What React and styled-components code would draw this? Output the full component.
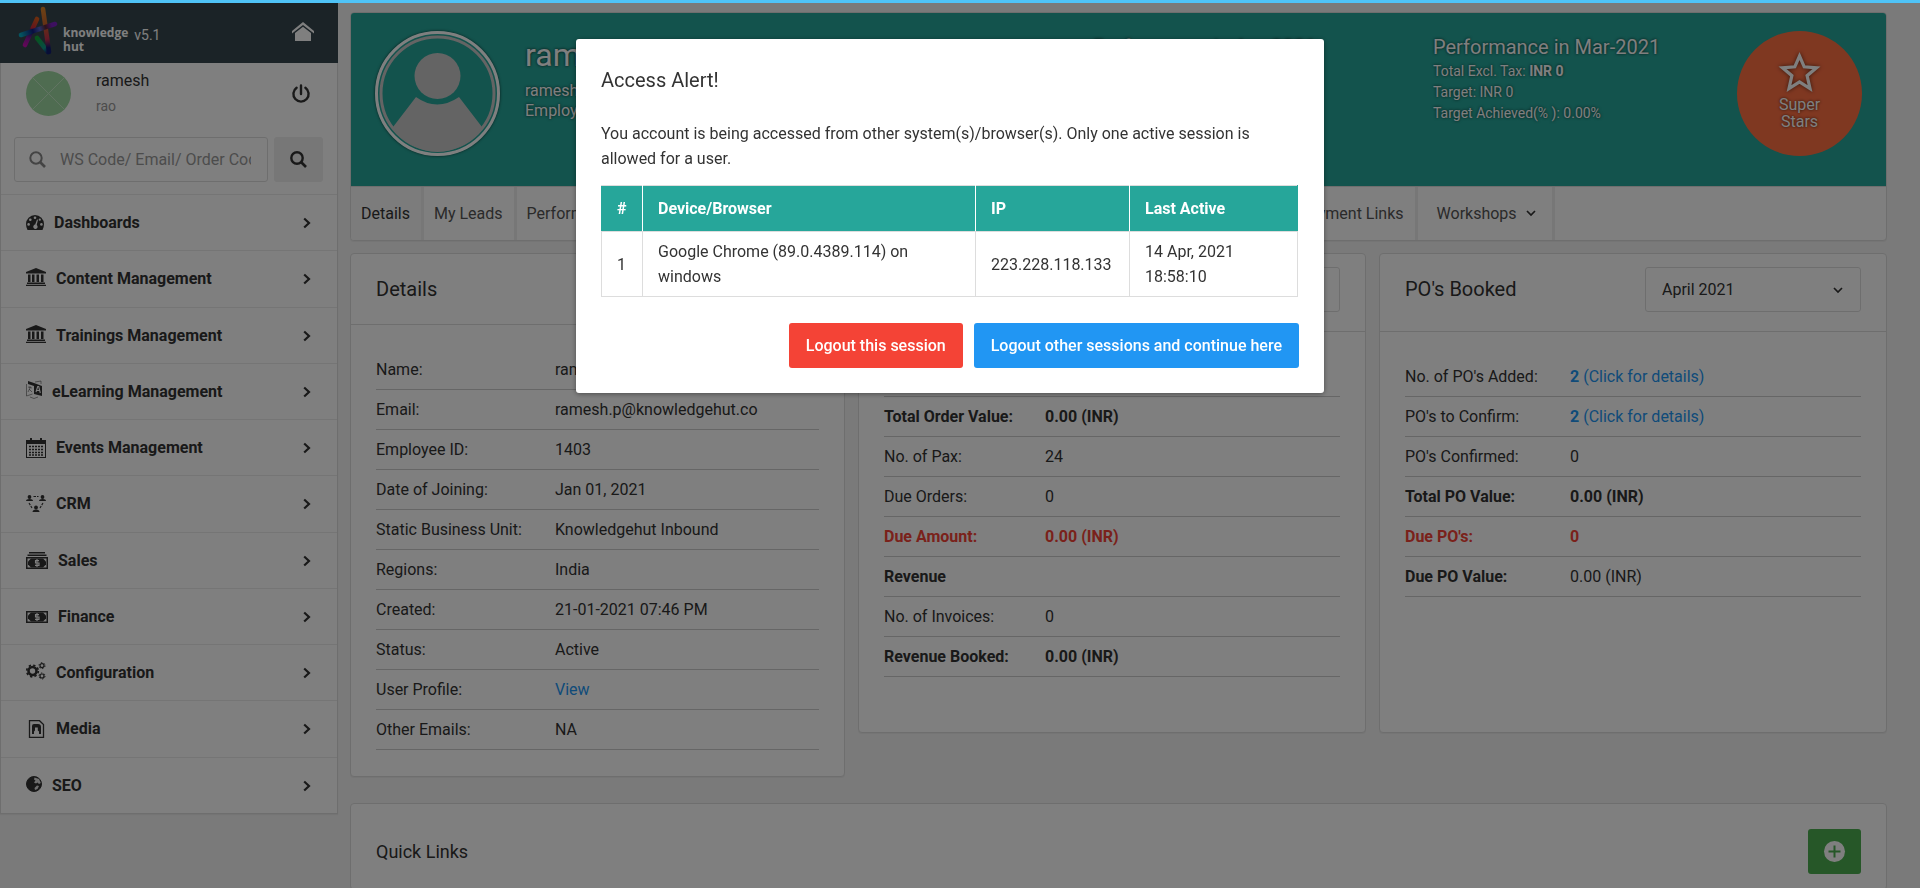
import React from "react";
import styled, { createGlobalStyle, css } from "styled-components";

const GlobalStyle = createGlobalStyle`
  *, *::before, *::after { box-sizing: border-box; }
  body {
    margin: 0;
    overflow: hidden;
    background: #f5f5f5;
    color: #333;
    font-family: Roboto, "Liberation Sans", sans-serif;
    font-size: 16px;
    line-height: 25px;
  }
  h1, h2, h3, p, dl, dd, ul { margin: 0; padding: 0; font-weight: 400; }
  ul { list-style: none; }
  a { color: inherit; text-decoration: none; }
  button, input, select { font: inherit; color: inherit; }
  button { cursor: pointer; border: 0; padding: 0; background: none; }
  svg { display: block; flex: none; overflow: visible; }
`;

const LoadingBar = styled.div`
  position: fixed;
  inset: 0 0 auto 0;
  height: 3px;
  background: #4fc3f7;
  z-index: 20;
`;

const Page = styled.div`
  display: flex;
  align-items: flex-start;
  gap: 12px;
  padding-right: 33px;
`;

/* ---------- Sidebar ---------- */

const Sidebar = styled.aside`
  flex: none;
  width: 338px;
`;

const BrandBar = styled.header`
  display: flex;
  align-items: center;
  height: 63px;
  padding: 0 24px 0 19px;
  background: #37474f;
  color: #fff;
`;

const BrandName = styled.span`
  margin: 16px 6px 0 5px;
  font: 700 12px/14px "Open Sans", "Noto Sans", sans-serif;
`;

const Version = styled.span`
  flex: 1;
  font-size: 14px;
  padding-top: 7px;
`;

const SidePanel = styled.div`
  background: #fff;
  border: 1px solid #ddd;
  border-top: 0;
  box-shadow: 0 1px 1px rgba(0, 0, 0, 0.05);
`;

const UserBlock = styled.div`
  display: flex;
  align-items: center;
  padding: 5px 27px 0 25px;
`;

const UserText = styled.div`
  flex: 1;
  padding-left: 25px;
  line-height: 26px;
`;

const UserSurname = styled.div`
  font-size: 14px;
  line-height: 24px;
  color: #999;
`;

const SearchForm = styled.form`
  display: flex;
  gap: 6px;
  padding: 19px 14px 12px 13px;
`;

const SearchField = styled.label`
  flex: 1;
  min-width: 0;
  display: flex;
  align-items: center;
  gap: 14px;
  height: 45px;
  padding: 0 16px 0 14px;
  border: 1px solid #ddd;
  border-radius: 3px;
  color: #999;

  input {
    flex: 1;
    min-width: 0;
    border: 0;
    padding: 0;
    outline: 0;
    background: none;
  }
  input::placeholder { color: #999; opacity: 1; }
`;

const SearchButton = styled.button`
  display: grid;
  place-items: center;
  width: 49px;
  height: 45px;
  border-radius: 3px;
  background: #eee;
`;

const MenuItem = styled.li`
  border-top: 1px solid #eaeaea;

  &:nth-child(4n + 2) { padding-bottom: 1px; }
`;

const MenuLink = styled.a`
  display: flex;
  align-items: center;
  gap: 10px;
  height: 55px;
  padding: 0 26px 0 25px;
  font-weight: 700;

  span { flex: 1; }
  svg:first-child { margin-bottom: ${(p) => (p.$raised ? 4 : 0)}px; }
`;

/* ---------- Main column ---------- */

const Main = styled.main`
  flex: 1;
  min-width: 0;
  padding-top: 12px;
`;

const Card = styled.section`
  background: #fff;
  border: 1px solid #ddd;
  border-radius: 4px;
  box-shadow: 0 1px 1px rgba(0, 0, 0, 0.05);
  overflow: hidden;
`;

const Hero = styled.div`
  display: flex;
  height: 173px;
  padding: 18px 24px 0 24px;
  background: #26a69a;
  color: #fff;
  text-shadow: 0 0 3px rgba(0, 0, 0, 0.8);
`;

const Avatar = styled.div`
  flex: none;
  width: 125px;
  height: 125px;
  border: 3px solid #fff;
  border-radius: 50%;
  box-shadow: 0 0 3px rgba(0, 0, 0, 0.7);
`;

const Person = styled.div`
  flex: 1;
  padding: 4px 0 0 25px;
  line-height: 20px;
`;

const PersonName = styled.h1`
  font-size: 32px;
  line-height: 40px;
  padding-bottom: 6px;
`;

const Performance = styled.div`
  flex: none;
  width: 340px;
  padding-top: 2px;
  font-size: 14px;
  line-height: 21px;
`;

const PerformanceTitle = styled.h2`
  font-size: 20px;
  line-height: 28px;
`;

const Badge = styled.div`
  flex: none;
  display: flex;
  flex-direction: column;
  align-items: center;
  width: 125px;
  height: 125px;
  margin-left: -36px;
  padding-top: 20px;
  border-radius: 50%;
  background: #ff7043;
  line-height: 17px;
  text-align: center;

  svg { margin-bottom: 4px; filter: drop-shadow(0 0 2px rgba(0, 0, 0, 0.6)); }
`;

const Tabs = styled.ul`
  display: flex;
  height: 54px;
  border-top: 1px solid #ddd;
`;

const Tab = styled.li`
  display: flex;
  border-right: 3px solid #eee;

  a {
    display: flex;
    align-items: center;
    gap: 9px;
    padding: 0 ${(p) => (p.$menu ? 16 : 11)}px 0 ${(p) => (p.$menu ? 19 : 10)}px;
    background: ${(p) => (p.$active ? "#f8f8f8" : "none")};
    color: ${(p) => (p.$active ? "#333" : "#555")};
  }
`;

const TabGap = styled.li`
  flex: 0 1 656px;
`;

const Panels = styled.div`
  display: grid;
  grid-template-columns: 495fr 1029fr;
  gap: 13px;
  align-items: start;
  padding: 12px 0 26px;
`;

const PanelPair = styled.div`
  display: grid;
  grid-template-columns: 1fr 1fr;
  gap: 13px;
`;

const PanelHead = styled.div`
  display: flex;
  align-items: flex-start;
  justify-content: space-between;
  padding: 13px 25px ${(p) => (p.$tall ? 19 : 12)}px;
  border-bottom: 1px solid #ddd;
`;

const PanelTitle = styled.h2`
  font-size: ${(p) => (p.$small ? 18 : 20)}px;
  line-height: 45px;
`;

const MonthSelect = styled.div`
  position: relative;
  width: 216px;

  select {
    appearance: none;
    width: 100%;
    height: 45px;
    padding: 0 16px;
    border: 1px solid #ddd;
    border-radius: 3px;
    background: #fff;
  }
  svg {
    position: absolute;
    right: 18px;
    top: 20px;
    pointer-events: none;
  }
`;

const Facts = styled.dl`
  padding: 25px 25px ${(p) => (p.$deep ? 55 : 26)}px;
`;

const tones = {
  bold: css`font-weight: 700;`,
  due: css`font-weight: 700; color: #f44336;`,
};

const Fact = styled.div`
  display: flex;
  height: 40px;
  padding-top: 7px;
  border-bottom: 1px solid #ccc;
  ${(p) => tones[p.$tone]}

  dt { flex: 0 0 ${(p) => p.$label}px; }
  dd { font-weight: ${(p) => (p.$plainValue ? 400 : "inherit")}; }
  a { color: #2196f3; }
`;

const QuickHead = styled.div`
  display: flex;
  align-items: flex-start;
  justify-content: space-between;
  padding: 25px 25px 14px;
  border-bottom: 1px solid #ddd;
`;

const AddButton = styled.button`
  display: grid;
  place-items: center;
  width: 53px;
  height: 45px;
  border-radius: 3px;
  background: #4caf50;
`;

/* ---------- Dialog ---------- */

const Backdrop = styled.div`
  position: fixed;
  inset: 0;
  display: flex;
  justify-content: center;
  align-items: flex-start;
  padding: 39px 20px 0 0;
  background: rgba(0, 0, 0, 0.5);
  z-index: 10;
`;

const Dialog = styled.div`
  width: 748px;
  padding: 26px 25px 25px;
  border-radius: 3px;
  background: #fff;
  box-shadow: 0 1px 5px rgba(0, 0, 0, 0.4);

  h2 { font-size: 20px; line-height: 30px; padding-bottom: 26px; }
`;

const SessionTable = styled.table`
  width: 697px;
  margin: 14px 0 26px;
  border-collapse: collapse;

  th, td {
    padding: 10px 15px;
    border: 1px solid #ddd;
    text-align: left;
  }
  th { border-color: #ddd #fff; background: #26a69a; color: #fff; font-weight: 700; }
  td { padding: 7px 15px; }
  th:first-child { border-left-color: #26a69a; }
  th:last-child { border-right-color: #26a69a; }
`;

const Actions = styled.div`
  display: flex;
  justify-content: flex-end;
  gap: 11px;
`;

const ActionButton = styled.button`
  height: 45px;
  padding: 0 17px;
  border-radius: 3px;
  background: ${(p) => (p.$danger ? "#f44336" : "#2196f3")};
  color: #fff;
  font-weight: 500;
`;

/* ---------- Drawings ---------- */

const Chevron = ({ down }) =>
  down ? (
    <svg width="10" height="7" viewBox="0 0 10 7" fill="none" stroke="#333" strokeWidth="1.7"><path d="M1 1l4 4 4-4" /></svg>
  ) : (
    <svg width="8" height="12" viewBox="0 0 8 12" fill="none" stroke="#333" strokeWidth="2.2"><path d="M1.2 1.5L6 6l-4.8 4.5" /></svg>
  );

const SearchIcon = ({ color, width }) => (
  <svg width="17" height="17" viewBox="0 0 17 17" fill="none" stroke={color} strokeWidth={width}>
    <circle cx="7" cy="7" r="5.7" /><path d="M11 11l5 5" strokeWidth="2.6" />
  </svg>
);

const LogoMark = () => (
  <svg width="39" height="50" viewBox="0 0 39 50" fill="none" strokeWidth="4.600" strokeLinecap="round">
    <defs>
      <linearGradient id="lgA" gradientUnits="userSpaceOnUse" x1="24" y1="2" x2="30" y2="45">
        <stop offset="0" stopColor="#d9822b" /><stop offset=".4" stopColor="#c8602a" /><stop offset=".7" stopColor="#c2304f" /><stop offset=".9" stopColor="#101c6e" />
      </linearGradient>
      <linearGradient id="lgB" gradientUnits="userSpaceOnUse" x1="18" y1="12" x2="6" y2="38">
        <stop offset="0" stopColor="#d85a1c" /><stop offset=".35" stopColor="#c82a3c" /><stop offset=".5" stopColor="#14206e" /><stop offset=".75" stopColor="#8a1a9e" /><stop offset="1" stopColor="#c010b0" />
      </linearGradient>
      <linearGradient id="lgC" gradientUnits="userSpaceOnUse" x1="2" y1="28" x2="36" y2="17">
        <stop offset="0" stopColor="#0aa8c0" /><stop offset=".35" stopColor="#101c80" /><stop offset=".55" stopColor="#5060c8" /><stop offset=".72" stopColor="#5a2430" /><stop offset=".9" stopColor="#7a20c0" />
      </linearGradient>
      <linearGradient id="lgD" gradientUnits="userSpaceOnUse" x1="18" y1="31" x2="29" y2="45">
        <stop offset="0" stopColor="#10a838" /><stop offset=".7" stopColor="#0f988c" /><stop offset="1" stopColor="#102070" />
      </linearGradient>
    </defs>
    <path d="M18 12L6 38" stroke="url(#lgB)" />
    <path d="M18 31l11 14" stroke="url(#lgD)" />
    <path d="M24 2l6 43" stroke="url(#lgA)" />
    <path d="M2 28l34-11" stroke="url(#lgC)" />
  </svg>
);

const HomeIcon = () => (
  <svg width="22" height="19" viewBox="0 0 22 19" fill="#fff">
    <path d="M11 0L0 9v2.5L11 3l11 8.500V9z" /><path d="M11 4.800L3 11v8h16v-8z" />
  </svg>
);

const PowerIcon = () => (
  <svg width="18" height="19" viewBox="0 0 18 19" fill="none" stroke="#333" strokeWidth="2.400" strokeLinecap="round">
    <path d="M9 1.500v8.500M4.600 3.800a7.600 7.600 0 1 0 8.800 0" />
  </svg>
);

const UserPicture = () => (
  <svg width="45" height="45" viewBox="0 0 45 45">
    <circle cx="22.500" cy="22.500" r="22.500" fill="#9fd8a2" />
    <path d="M7 7l31 31M38 7L7 38" stroke="#c4e8c6" strokeWidth="1" />
  </svg>
);

const ProfilePicture = () => (
  <svg width="119" height="119" viewBox="0 0 119 119">
    <circle cx="59.500" cy="59.500" r="56.500" fill="none" stroke="#c8c8c8" strokeWidth="3" />
    <circle cx="59.500" cy="42" r="23" fill="#c8c8c8" />
    <path d="M38 63Q59 78 81 63L104 93Q88 117 59.500 118 31 117 15 93z" fill="#c8c8c8" />
  </svg>
);

const StarIcon = () => (
  <svg width="41" height="41" viewBox="0 0 41 41" fill="none" stroke="#fff" strokeWidth="3.200">
    <path d="M20.500 5l4.700 10.800 12.300 1-9.400 7.900 2.900 12.800-10.500-6.700L10 37.500l2.900-12.800-9.400-7.900 12.300-1z" />
  </svg>
);

const note = (y) => (
  <>
    <path fillRule="evenodd" d={`M0 ${y}h22v12H0zM1.500 ${y + 1.5}v9h19v-9z`} />
    <path d={`M5 ${y + 1.5}h12l3 3v3l-3 3H5l-3-3v-3z`} />
    <g stroke="#fff" fill="none" strokeWidth="1.100">
      <path d={`M13 ${y + 3.6}H9.500v2.400H13v2.400H9M11 ${y + 2}v8`} />
    </g>
  </>
);

const icons = {
  gauge: (
    <svg width="18" height="15" viewBox="0 0 18 15">
      <path fill="#333" d="M9 0a9 9 0 0 0-9 9c0 2 .5 4 1.500 6h15C17.500 13 18 11 18 9a9 9 0 0 0-9-9z" />
      <g fill="#fff"><circle cx="9" cy="2.700" r="1.300" /><circle cx="4.300" cy="4.700" r="1.300" /><circle cx="2.600" cy="9.400" r="1.300" /><circle cx="15.400" cy="9.400" r="1.300" /><circle cx="13.800" cy="4.700" r="1.100" /><path d="M11 4.500l1 .3-1.300 5.200a2.200 2.200 0 1 1-1.500-.4z" /></g>
    </svg>
  ),
  bank: (
    <svg width="20" height="18" viewBox="0 0 20 18" fill="#333">
      <path d="M10 0L0 4v1.500h20V4zM2 6.500h2.500V14H2zM6 6.500h2.500V14H6zM10.500 6.500H13V14h-2.500zM15 6.500h2.500V14H15zM1 14.500h18V16H1zM0 16.700h20V18H0z" />
    </svg>
  ),
  language: (
    <svg width="16" height="18" viewBox="0 0 16 18" fill="#333">
      <path d="M2 0l6 2v3L2 3z" /><path d="M8 2l8 3v10l-8-2z" />
      <path d="M10 11l1.700-5.500h1L14.300 12M10.800 9.500h2.600" fill="none" stroke="#fff" strokeWidth="1.100" />
      <path d="M.500 3v12l6-2M2 6l4 1M4 5v2L2 11M3 8l3 3M9 1l6-1v3M4 16q4 3 8 0" fill="none" stroke="#333" strokeWidth=".5" />
    </svg>
  ),
  calendar: (
    <svg width="20" height="20" viewBox="0 0 20 20" fill="#333">
      <path fillRule="evenodd" d="M0 2h4V0h2v2h8V0h2v2h4v18H0zM1 6v13h18V6z" />
      <path d="M3 8.500h14M3 11.500h14M3 14.500h14M3 17h14" stroke="#333" strokeWidth="1.600" strokeDasharray="2 1" />
    </svg>
  ),
  crm: (
    <svg width="20" height="17" viewBox="0 0 20 17" fill="#333">
      <circle cx="3.500" cy="2" r="1.900" /><path d="M0 6q0-2 3.500-2T7 6z" />
      <circle cx="16.500" cy="2" r="1.900" /><path d="M13 6q0-2 3.500-2T20 6z" />
      <circle cx="10" cy="12.500" r="1.900" /><path d="M6.500 17q0-2.500 3.500-2.500t3.500 2.500z" />
      <path d="M7.500 1.500h5M3 8l3 5M17 8l-3 5" fill="none" stroke="#333" strokeWidth="1.100" strokeDasharray="2.500 1" />
    </svg>
  ),
  cash: (
    <svg width="22" height="17" viewBox="0 0 22 17" fill="#333"><path d="M3 0h16v1.500H3zM1.500 2.500h19V4h-19z" />{note(5)}</svg>
  ),
  note: <svg width="22" height="12" viewBox="0 0 22 12" fill="#333">{note(0)}</svg>,
  gears: (
    <svg width="20" height="18" viewBox="0 0 20 18" fill="none" stroke="#333">
      <circle cx="6.500" cy="9" r="4" strokeWidth="2.600" /><circle cx="6.500" cy="9" r="5.800" strokeWidth="1.700" strokeDasharray="2.300 2.255" />
      <circle cx="16" cy="3.600" r="2" strokeWidth="1.200" /><circle cx="16" cy="3.600" r="3" strokeWidth="1" strokeDasharray="1.500 1.640" />
      <circle cx="16" cy="14" r="2" strokeWidth="1.200" /><circle cx="16" cy="14" r="3" strokeWidth="1" strokeDasharray="1.500 1.640" />
    </svg>
  ),
  media: (
    <svg width="20" height="18" viewBox="0 0 20 18" fill="none" stroke="#333">
      <path d="M3.500.700h10l4 3.800v12.800h-14z" strokeWidth="1.300" />
      <path fill="#333" stroke="none" d="M6 14V6q0-2 2-2h4q3 0 3 3v7h-2v-2.500l-1.200-1V7.500H9v3L8 11.500V14z" />
    </svg>
  ),
  globe: (
    <svg width="16" height="16" viewBox="0 0 16 16">
      <circle cx="8" cy="8" r="7.500" fill="#333" stroke="#333" />
      <path fill="#fff" d="M8.500 1.500L13 3l1.800 4-1.800 1-1.500-1.500L10 7.500 8 6.500l1.500-2L8 3.500zM11 9.500l2 .5-1.500 3-2.500 1-.5-2z" opacity=".85" />
    </svg>
  ),
  plus: (
    <svg width="21" height="21" viewBox="0 0 21 21">
      <circle cx="10.500" cy="10.500" r="10.500" fill="#fff" /><path d="M10.500 4.500v12M4.500 10.500h12" stroke="#4caf50" strokeWidth="2" />
    </svg>
  ),
};

/* ---------- Data ---------- */

const menu = [
  ["gauge", "Dashboards"],
  ["bank", "Content Management", true],
  ["bank", "Trainings Management", true],
  ["language", "eLearning Management", true],
  ["calendar", "Events Management"],
  ["crm", "CRM"],
  ["cash", "Sales"],
  ["note", "Finance"],
  ["gears", "Configuration", true],
  ["media", "Media"],
  ["globe", "SEO", true],
];

const details = [
  ["Name:", "ramesh rao"],
  ["Email:", "ramesh.p@knowledgehut.co"],
  ["Employee ID:", "1403"],
  ["Date of Joining:", "Jan 01, 2021"],
  ["Static Business Unit:", "Knowledgehut Inbound"],
  ["Regions:", "India"],
  ["Created:", "21-01-2021 07:46 PM"],
  ["Status:", "Active"],
  ["User Profile:", <a href="#profile">View</a>],
  ["Other Emails:", "NA"],
];

const orders = [
  ["No. of Orders:", "0"],
  ["Total Order Value:", "0.00 (INR)", "bold"],
  ["No. of Pax:", "24"],
  ["Due Orders:", "0"],
  ["Due Amount:", "0.00 (INR)", "due"],
  ["Revenue", "", "bold"],
  ["No. of Invoices:", "0"],
  ["Revenue Booked:", "0.00 (INR)", "bold"],
];

const bookings = [
  ["No. of PO's Added:", <a href="#added"><b>2</b> (Click for details)</a>],
  ["PO's to Confirm:", <a href="#confirm"><b>2</b> (Click for details)</a>],
  ["PO's Confirmed:", "0"],
  ["Total PO Value:", "0.00 (INR)", "bold"],
  ["Due PO's:", "0", "due"],
  ["Due PO Value:", "0.00 (INR)", "bold", true],
];

function FactList({ rows, label, deep }) {
  return (
    <Facts $deep={deep}>
      {rows.map(([name, value, tone, plain]) => (
        <Fact key={name} $tone={tone} $label={label} $plainValue={plain}>
          <dt>{name}</dt>
          <dd>{value}</dd>
        </Fact>
      ))}
    </Facts>
  );
}

function MonthPanel({ title, rows, label, deep }) {
  return (
    <Card>
      <PanelHead $tall>
        <PanelTitle>{title}</PanelTitle>
        <MonthSelect>
          <select aria-label={`${title} month`} defaultValue="April 2021">
            <option>April 2021</option>
          </select>
          <Chevron down />
        </MonthSelect>
      </PanelHead>
      <FactList rows={rows} label={label} deep={deep} />
    </Card>
  );
}

export default function App() {
  return (
    <>
      <GlobalStyle />
      <LoadingBar />
      <Page>
        <Sidebar>
          <BrandBar>
            <LogoMark />
            <BrandName>knowledge<br />hut</BrandName>
            <Version>v5.1</Version>
            <a href="#home" aria-label="Home"><HomeIcon /></a>
          </BrandBar>
          <SidePanel>
            <UserBlock>
              <UserPicture />
              <UserText>
                ramesh
                <UserSurname>rao</UserSurname>
              </UserText>
              <button aria-label="Log out"><PowerIcon /></button>
            </UserBlock>
            <SearchForm>
              <SearchField>
                <SearchIcon color="#888" width="2" />
                <input aria-label="Search" placeholder="WS Code/ Email/ Order Code" />
              </SearchField>
              <SearchButton type="button" aria-label="Search"><SearchIcon color="#333" width="2.400" /></SearchButton>
            </SearchForm>
            <nav>
              <ul>
                {menu.map(([icon, label, raised]) => (
                  <MenuItem key={label}>
                    <MenuLink href="#menu" $raised={raised}>
                      {icons[icon]}
                      <span>{label}</span>
                      <Chevron />
                    </MenuLink>
                  </MenuItem>
                ))}
              </ul>
            </nav>
          </SidePanel>
        </Sidebar>

        <Main>
          <Card>
            <Hero>
              <Avatar><ProfilePicture /></Avatar>
              <Person>
                <PersonName>ramesh rao</PersonName>
                <div>ramesh.p@knowledgehut.co</div>
                <div>Employee ID: 1403</div>
              </Person>
              <Performance>
                <PerformanceTitle>Performance in Apr-2021</PerformanceTitle>
              </Performance>
              <Performance>
                <PerformanceTitle>Performance in Mar-2021</PerformanceTitle>
                <div>Total Excl. Tax: <b>INR 0</b></div>
                <div>Target: INR 0</div>
                <div>Target Achieved(% ): 0.00%</div>
              </Performance>
              <Badge>
                <StarIcon />
                <span>Super<br />Stars</span>
              </Badge>
            </Hero>
            <Tabs>
              <Tab $active><a href="#details">Details</a></Tab>
              <Tab><a href="#leads">My Leads</a></Tab>
              <Tab><a href="#performance">Performance</a></Tab>
              <TabGap />
              <Tab><a href="#payments">Payment Links</a></Tab>
              <Tab $menu><a href="#workshops">Workshops <Chevron down /></a></Tab>
            </Tabs>
          </Card>

          <Panels>
            <Card>
              <PanelHead>
                <PanelTitle>Details</PanelTitle>
              </PanelHead>
              <FactList rows={details} label={179} />
            </Card>
            <PanelPair>
              <MonthPanel title="Orders" rows={orders} label={161} deep />
              <MonthPanel title="PO's Booked" rows={bookings} label={165} />
            </PanelPair>
          </Panels>

          <Card>
            <QuickHead>
              <PanelTitle $small>Quick Links</PanelTitle>
              <AddButton aria-label="Add quick link">{icons.plus}</AddButton>
            </QuickHead>
          </Card>
        </Main>
      </Page>

      <Backdrop>
        <Dialog role="dialog" aria-modal="true" aria-labelledby="alert-title">
          <h2 id="alert-title">Access Alert!</h2>
          <p>
            You account is being accessed from other system(s)/browser(s). Only one active session is
            allowed for a user.
          </p>
          <SessionTable>
            <colgroup>
              <col width="41" />
              <col width="333" />
              <col width="154" />
              <col width="168" />
            </colgroup>
            <thead>
              <tr><th>#</th><th>Device/Browser</th><th>IP</th><th>Last Active</th></tr>
            </thead>
            <tbody>
              <tr>
                <td>1</td>
                <td>Google Chrome (89.0.4389.114) on windows</td>
                <td>223.228.118.133</td>
                <td>14 Apr, 2021 18:58:10</td>
              </tr>
            </tbody>
          </SessionTable>
          <Actions>
            <ActionButton $danger>Logout this session</ActionButton>
            <ActionButton>Logout other sessions and continue here</ActionButton>
          </Actions>
        </Dialog>
      </Backdrop>
    </>
  );
}
